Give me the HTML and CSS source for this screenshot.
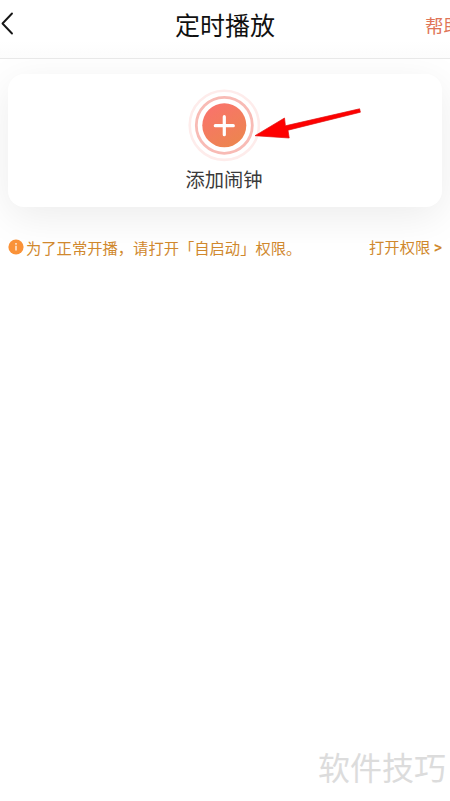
FILE: index.html
```html
<!DOCTYPE html>
<html lang="zh-CN">
<head>
<meta charset="utf-8">
<title>定时播放</title>
<link rel="stylesheet" href="styles.css">
</head>
<body>
<div class="screen">
  <header class="header">
    <svg class="back" width="16" height="26" viewBox="0 0 16 26"><path d="M12 3.5 2.5 13.5 12 23.5" fill="none" stroke="#161616" stroke-width="1.9" stroke-linecap="round" stroke-linejoin="round"/></svg>
    <h1 class="title">定时播放</h1>
    <span class="help">帮助</span>
  </header>
  <main class="content">
    <section class="card">
      <svg class="add" width="74" height="74" viewBox="0 0 74 74">
        <defs><linearGradient id="coral" x1="0" y1="0" x2="0.6" y2="1"><stop offset="0" stop-color="#fb716f"/><stop offset="1" stop-color="#ed8450"/></linearGradient></defs>
        <circle cx="37.3" cy="37.3" r="34.6" fill="none" stroke="#feeceb" stroke-width="2.6"/>
        <circle cx="37.3" cy="37.3" r="28" fill="none" stroke="#f8bbb5" stroke-width="2.8"/>
        <circle cx="37.3" cy="37.3" r="22" fill="url(#coral)"/>
        <path d="M37.3 28.7v18M28.3 37.7h18" stroke="#fff" stroke-width="3.2" stroke-linecap="round"/>
      </svg>
      <span class="label">添加闹钟</span>
    </section>
    <div class="notice">
      <svg class="info" width="16" height="16" viewBox="0 0 16 16"><circle cx="8" cy="8" r="7.6" fill="#fa9238"/><circle cx="8" cy="4.9" r="0.8" fill="#fff"/><path d="M8 6.8v4.8" stroke="#fff" stroke-width="1.2"/></svg>
      <span class="message">为了正常开播，请打开「自启动」权限。</span>
      <span class="permission">打开权限 <b>&gt;</b></span>
    </div>
  </main>
  <svg class="arrow" width="110" height="34" viewBox="0 0 110 34"><path d="M1 28.7 30.5 11 31.4 18.8 105.6 1.8 106.4 5.2 34 23.2 35.2 31Z" fill="#fe0000" stroke="#e01010" stroke-width="0.7"/></svg>
  <div class="watermark">软件技巧</div>
</div>
</body>
</html>
```
FILE: styles.css
```css
* {
  box-sizing: border-box;
}

body {
  margin: 0;
  background: #fff;
  font-family: "Noto Sans CJK SC", sans-serif;
}

.screen {
  position: relative;
  display: flex;
  flex-direction: column;
  width: 450px;
  height: 801px;
  overflow: hidden;
}

.header {
  display: grid;
  grid-template-columns: 1fr 100px 1fr;
  align-items: center;
  height: 59px;
  padding-bottom: 9px;
  border-bottom: 1px solid #e8e8e8;
  background: linear-gradient(#fff 70%, #fcfcfc);
}

.back {
  margin-top: -3px;
}

.title {
  margin: -2px 0 0;
  font-size: 25px;
  font-weight: 400;
  line-height: 36px;
  white-space: nowrap;
  color: #111;
}

.help {
  justify-self: end;
  margin-right: -12px;
  font-size: 18.5px;
  line-height: 28px;
  color: #e07558;
}

.content {
  flex: 1;
  padding: 15px 8px 0;
  overflow: hidden;
}

.card {
  display: flex;
  flex-direction: column;
  align-items: center;
  height: 133px;
  padding: 14px 2px 0 0;
  border-radius: 16px;
  background: #fff;
  box-shadow: 0 10px 42px rgba(0, 0, 0, 0.08);
}

.add {
  flex: none;
}

.label {
  margin-top: 3px;
  font-size: 19.3px;
  line-height: 28px;
  color: #3a3a3a;
}

.notice {
  position: relative;
  display: flex;
  align-items: center;
  height: 24px;
  margin-top: 28px;
  font-size: 15.3px;
  line-height: 24px;
  white-space: nowrap;
  color: #d0882d;
}

.info {
  flex: none;
  margin-right: 2px;
}

.message {
  margin-top: -1px;
}

.permission {
  margin-left: auto;
}

.permission b {
  font-family: Roboto, sans-serif;
  font-size: 16px;
  font-weight: 500;
}

.arrow {
  position: absolute;
  top: 107px;
  left: 254px;
}

.watermark {
  align-self: flex-end;
  height: 58px;
  margin-right: 4px;
  font-size: 32px;
  font-weight: 400;
  line-height: 46px;
  color: #dcdcdc;
}
```
